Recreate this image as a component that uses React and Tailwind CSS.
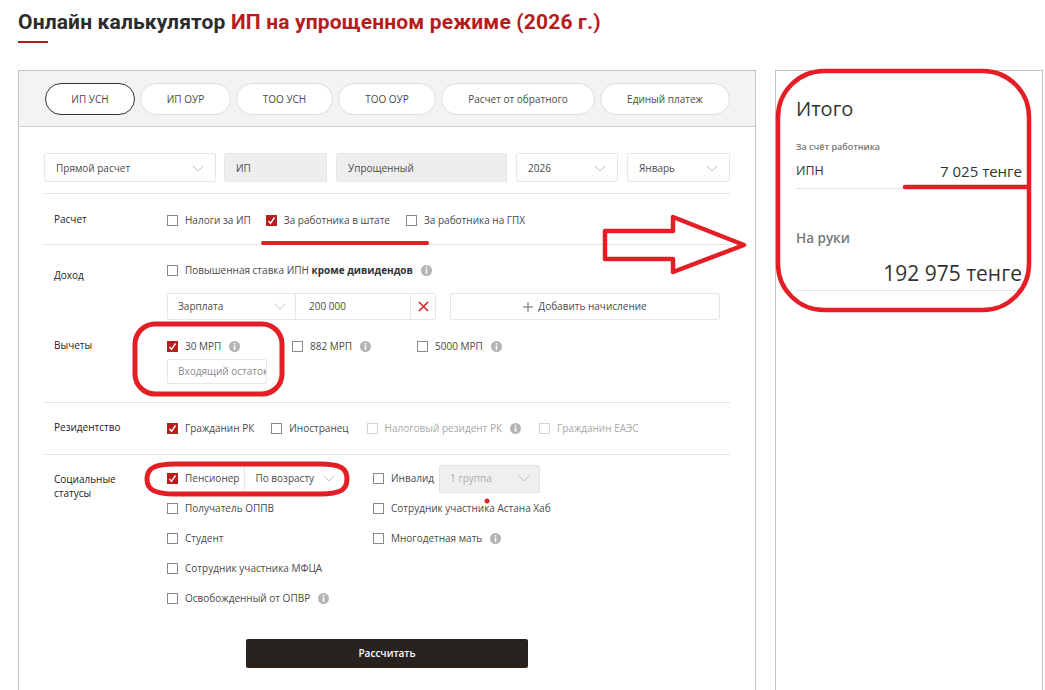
const Chevron = () => (
  <svg width="12" height="7" viewBox="0 0 12 7" fill="none" className="shrink-0">
    <path d="M.5.5l5.5 5.5L11.5.5" stroke="#c4c4c4" strokeWidth="1" />
  </svg>
);

const Info = () => (
  <svg width="11" height="11" viewBox="0 0 11 11" className="shrink-0">
    <circle cx="5.5" cy="5.5" r="5.5" fill="#b4b4b4" />
    <rect x="4.7" y="2" width="1.6" height="1.5" fill="#fff" />
    <rect x="4.7" y="4.4" width="1.6" height="4.4" fill="#fff" />
  </svg>
);

const Check = ({ on, off, label, info, bold, w }) => (
  <div className={`flex items-center gap-[7px] ${w || ""}`}>
    {on ? (
      <span className="flex h-[11px] w-[11px] shrink-0 items-center justify-center bg-[#b81c1c]">
        <svg width="9" height="9" viewBox="0 0 9 9" fill="none">
          <path d="M1.5 5l2 2.3L7.5 1.5" stroke="#fff" strokeWidth="1.4" />
        </svg>
      </span>
    ) : (
      <span className={`h-[11px] w-[11px] shrink-0 border ${off ? "border-[#d4d4d4]" : "border-[#8a8a8a]"}`} />
    )}
    <span className={`whitespace-nowrap ${off ? "text-[#a8a8a8]" : "text-[#4a4a4a]"}`}>
      {label}
      {bold && <b className="font-bold text-[#333]"> {bold}</b>}
    </span>
    {info && <span className="ml-[1px]"><Info /></span>}
  </div>
);

const Select = ({ w, label, plain, grey }) => (
  <div
    className={`flex h-[29px] ${w} shrink-0 items-center justify-between rounded-[2px] border px-[11px] pt-[1px] text-[#4a4a4a] ${
      grey ? "border-[#e6e6e6] bg-[#eeeeee]" : "border-[#e6e6e6] bg-white"
    }`}
  >
    <span className="whitespace-nowrap">{label}</span>
    {!plain && <Chevron />}
  </div>
);

const tabs = [
  ["ИП УСН", "w-[90px]", true],
  ["ИП ОУР", "w-[91px]"],
  ["ТОО УСН", "w-[97px]"],
  ["ТОО ОУР", "w-[98px]"],
  ["Расчет от обратного", "w-[154px]"],
  ["Единый платеж", "w-[130px]"],
];

const Label = ({ children }) => (
  <div className="w-[123px] shrink-0 pl-[10px] font-medium leading-[14px] text-[#222]">{children}</div>
);

export default function App() {
  return (
    <div className="relative h-[690px] w-[1045px] overflow-hidden bg-white font-['Open_Sans',sans-serif] text-[10px]">
      <header className="pl-[18px] pt-[8px]">
        <h1 className="font-['Roboto',sans-serif] text-[21px] font-bold leading-[28px] tracking-[0.15px] text-[#2b2b2b]">
          Онлайн калькулятор <span className="text-[#b71c1c]">ИП на упрощенном режиме (2026 г.)</span>
        </h1>
        <div className="mt-[5px] h-[2px] w-[30px] bg-[#b71c1c]" />
      </header>

      <div className="ml-[18px] mt-[27px] flex items-start gap-[19px]">
        <main className="h-[640px] w-[738px] shrink-0 border border-[#c4c4c4]">
          <div className="flex h-[56px] items-start gap-[5px] border-b border-[#cfcfcf] bg-[#f3f3f3] pl-[26px] pt-[12px]">
            {tabs.map(([t, w, active]) => (
              <div
                key={t}
                className={`flex h-[32px] ${w} shrink-0 items-center justify-center rounded-full border bg-white text-[#4a4a4a] ${
                  active ? "border-[#333]" : "border-[#dcdcdc]"
                }`}
              >
                {t}
              </div>
            ))}
          </div>

          <div className="px-[25px] pt-[26px]">
            <div className="flex gap-[8px] pb-[11px]">
              <Select w="w-[172px]" label="Прямой расчет" />
              <Select w="w-[103px]" label="ИП" plain grey />
              <Select w="ml-[1px] w-[171px]" label="Упрощенный" plain grey />
              <Select w="ml-[1px] w-[102px]" label="2026" />
              <Select w="ml-[1px] w-[103px]" label="Январь" />
            </div>

            <section className="flex h-[51px] items-center border-t border-[#e4e4e4]">
              <Label>Расчет</Label>
              <div className="flex items-center gap-[15px] pt-[2px]">
                <Check label="Налоги за ИП" />
                <Check on label="За работника в штате" />
                <Check w="ml-[1px]" label="За работника на ГПХ" />
              </div>
            </section>

            <section className="h-[158px] border-t border-[#e4e4e4] pt-[18px]">
              <div className="flex items-start">
                <div className="w-[123px] shrink-0 pl-[10px] pt-[5px] font-medium text-[#222]">Доход</div>
                <div>
                  <Check label="Повышенная ставка ИПН" bold="кроме дивидендов" info />
                  <div className="mt-[15px] flex w-[553px] gap-[14px]">
                    <div className="flex h-[27px] w-[269px] items-center rounded-[2px] border border-[#e6e6e6] text-[#4a4a4a]">
                      <div className="flex h-full w-[128px] items-center justify-between border-r border-[#e6e6e6] pl-[10px] pr-[9px]">
                        Зарплата <Chevron />
                      </div>
                      <div className="flex h-full w-[115px] items-center border-r border-[#e6e6e6] pl-[13px]">200 000</div>
                      <div className="flex flex-1 items-center justify-center">
                        <svg width="11" height="11" viewBox="0 0 11 11" fill="none">
                          <path d="M1 1l9 9M10 1l-9 9" stroke="#c92a2a" strokeWidth="1.6" />
                        </svg>
                      </div>
                    </div>
                    <div className="flex h-[27px] w-[270px] items-center justify-center gap-[5px] rounded-[2px] border border-[#e6e6e6] text-[#4a4a4a]">
                      <svg width="10" height="10" viewBox="0 0 10 10" fill="none">
                        <path d="M5 0v10M0 5h10" stroke="#666" strokeWidth="1" />
                      </svg>
                      Добавить начисление
                    </div>
                  </div>
                </div>
              </div>
              <div className="mt-[18px] flex items-start">
                <div className="w-[123px] shrink-0 pl-[10px] font-medium leading-[14px] text-[#222]">Вычеты</div>
                <div className="w-[125px] pt-[1px]">
                  <Check on label="30 МРП" info />
                  <div className="mt-[5px] flex h-[25px] w-[100px] items-center overflow-hidden whitespace-nowrap rounded-[2px] border border-[#e6e6e6] pl-[10px] text-[#8a8a8a]">
                    Входящий остаток
                  </div>
                </div>
                <div className="w-[125px] pt-[1px]"><Check label="882 МРП" info /></div>
                <div className="pt-[1px]"><Check label="5000 МРП" info /></div>
              </div>
            </section>

            <section className="flex h-[52px] items-center border-t border-[#e4e4e4] pb-[4px]">
              <Label>Резидентство</Label>
              <div className="flex items-center gap-[17px] pt-[4px]">
                <Check on label="Гражданин РК" />
                <Check label="Иностранец" />
                <Check w="ml-[1px]" off label="Налоговый резидент РК" info />
                <Check w="ml-[1px]" off label="Гражданин ЕАЭС" />
              </div>
            </section>

            <section className="flex border-t border-[#e4e4e4] pt-[10px]">
              <div className="w-[123px] shrink-0 pl-[10px] pt-[7px] font-medium leading-[14px] text-[#222]">
                Социальные
                <br />
                статусы
              </div>
              <div className="flex">
                <div className="w-[206px]">
                  <div className="flex h-[27px] items-center">
                    <Check on label="Пенсионер" />
                    <div className="ml-[5px] flex h-[28px] w-[101px] items-center justify-between rounded-[2px] border border-[#e6e6e6] pl-[10px] pr-[9px] text-[#4a4a4a]">
                      По возрасту <Chevron />
                    </div>
                  </div>
                  <div className="mt-[9px] flex flex-col gap-[16px] leading-[14px]">
                    <Check label="Получатель ОППВ" />
                    <Check label="Студент" />
                    <Check label="Сотрудник участника МФЦА" />
                    <Check label="Освобожденный от ОПВР" info />
                  </div>
                </div>
                <div>
                  <div className="flex h-[27px] items-center">
                    <Check label="Инвалид" />
                    <div className="ml-[5px] flex h-[28px] w-[101px] items-center justify-between rounded-[2px] border border-[#e2e2e2] bg-[#efefef] pl-[10px] pr-[9px] text-[#ababab]">
                      1 группа <Chevron />
                    </div>
                  </div>
                  <div className="mt-[9px] flex flex-col gap-[16px] leading-[14px]">
                    <Check label="Сотрудник участника Астана Хаб" />
                    <Check label="Многодетная мать" info />
                  </div>
                </div>
              </div>
            </section>

            <div className="mt-[34px] ml-[202px] flex h-[29px] w-[282px] items-center justify-center rounded-[2px] bg-[#28231e] font-semibold text-white">
              Рассчитать
            </div>
          </div>
        </main>

        <aside className="h-[640px] w-[268px] shrink-0 border border-[#c4c4c4] px-[20px] pt-[24px]">
          <div className="text-[20px] leading-[28px] text-[#333]">Итого</div>
          <div className="mt-[18px] text-[9px] font-semibold leading-[12px] text-[#777]">За счёт работника</div>
          <div className="mt-[9px] flex items-center justify-between border-b border-[#e2e2e2] pb-[8px] text-[#333]">
            <span className="text-[12.5px] leading-[18px]">ИПН</span>
            <span className="text-[15px] leading-[18px]">7 025 тенге</span>
          </div>
          <div className="mt-[40px] text-[13.5px] font-semibold leading-[18px] text-[#777]">На руки</div>
          <div className="mt-[12px] border-b border-[#e2e2e2] pb-[3px] text-right text-[21px] leading-[28px] text-[#333]">
            192 975 тенге
          </div>
        </aside>
      </div>

      <svg className="pointer-events-none absolute left-0 top-0" width="1045" height="690" fill="none" stroke="#e31e26">
        <rect x="778" y="71" width="251" height="239" rx="46" strokeWidth="4.5" />
        <path d="M905 187H1028" strokeWidth="4.5" strokeLinecap="round" />
        <path d="M263 243H427" strokeWidth="4" strokeLinecap="round" />
        <path d="M605 231H673V217L744 245L673 272V259H605Z" strokeWidth="4.5" strokeLinejoin="round" />
        <rect x="135" y="324" width="147" height="70" rx="20" strokeWidth="5" />
        <path d="M147 479C147 468 155 464 175 464H320C340 464 347 468 347 479C347 490 340 494 320 494H175C155 494 147 490 147 479Z" strokeWidth="5" />
        <circle cx="487" cy="501" r="2.5" fill="#e31e26" stroke="none" />
      </svg>
    </div>
  );
}
